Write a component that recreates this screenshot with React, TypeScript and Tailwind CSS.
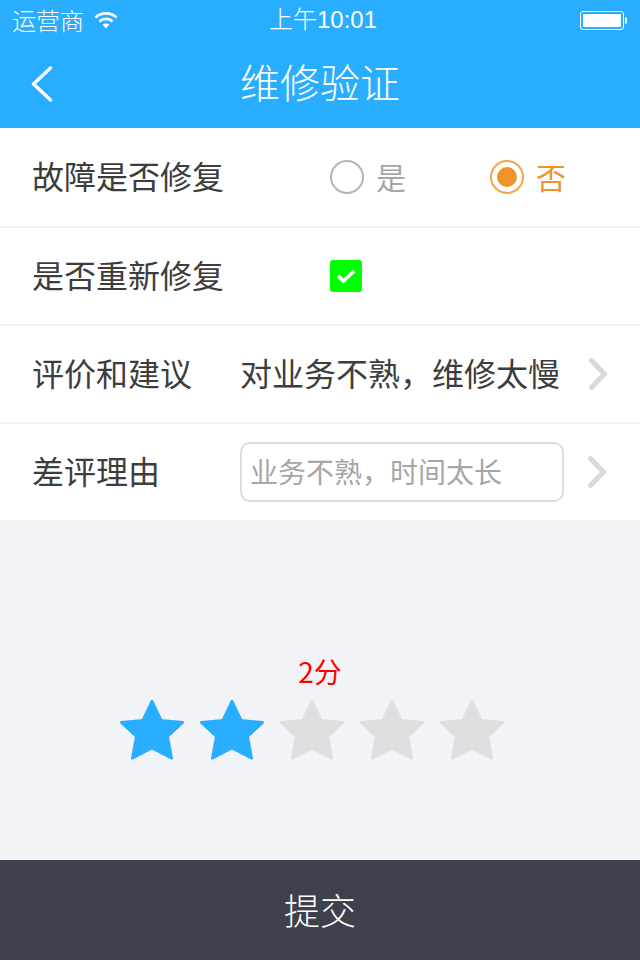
const cjk = 'font-["Noto_Sans_CJK_SC","Noto_Sans",sans-serif]';

function Star({ on }: { on: boolean }) {
  const color = on ? '#29adff' : '#dedee0';
  return (
    <svg width="66" height="64" viewBox="0 0 66 64" aria-hidden>
      <path
        d="M33 3.5 L42 22.5 L63.5 24.5 L48.5 38.5 L52.5 60 L33 50 L13.5 60 L17.5 38.5 L2.5 24.5 L24 22.5 Z"
        fill={color}
        stroke={color}
        strokeWidth="3"
        strokeLinejoin="round"
      />
    </svg>
  );
}

function Chevron({ className }: { className: string }) {
  return (
    <svg className={className} width="20" height="34" viewBox="0 0 20 34" fill="none" stroke="#d8d9dc" strokeWidth="5" strokeLinecap="round" strokeLinejoin="round" aria-hidden>
      <path d="M3.5 3.5 L16.5 17 L3.5 30.5" />
    </svg>
  );
}

function Row({ label, children, last }: { label: string; children: React.ReactNode; last?: boolean }) {
  return (
    <div className={`flex items-center pl-[32px] ${last ? 'h-[96px]' : 'h-[98px] border-b-2 border-[#f2f3f7]'}`}>
      <span className="w-[208px] shrink-0 pb-[4px] text-[32px] leading-none text-[#3d3d3d]">{label}</span>
      {children}
    </div>
  );
}

export default function App() {
  return (
    <div className={`flex h-[960px] w-[640px] flex-col bg-[#f2f3f7] ${cjk}`}>
      <header className="h-[128px] shrink-0 bg-[#29adff] font-light text-white">
        {/* status bar */}
        <div className="relative flex h-[40px] items-center pl-[12px] pr-[13px]">
          <span className="text-[24px] leading-none">运营商</span>
          <svg className="ml-[10px]" width="24" height="18" viewBox="0 0 24 18" fill="none" stroke="#fff" strokeWidth="2.6" aria-hidden>
            <path d="M1.5 6.5 C7 1 17 1 22.5 6.5" />
            <path d="M5.5 10.5 C9 7 15 7 18.5 10.5" />
            <path d="M12 17.5 L8.6 13.6 C10.5 12 13.5 12 15.4 13.6 Z" fill="#fff" stroke="none" />
          </svg>
          <span className="absolute left-[269px] font-['Liberation_Sans','Noto_Sans_CJK_SC',sans-serif] text-[24px] leading-none">上午10:01</span>
          <div className="ml-auto flex items-center">
            <div className="h-[19px] w-[44px] rounded-[3px] border border-white p-[2px]">
              <div className="h-full w-full rounded-[1px] bg-white" />
            </div>
            <div className="ml-[1px] h-[7px] w-[2px] rounded-r-sm bg-white" />
          </div>
        </div>
        {/* nav bar */}
        <div className="relative flex h-[88px] items-center justify-center pb-[6px]">
          <svg className="absolute left-[30px] top-[26px]" width="24" height="36" viewBox="0 0 24 36" fill="none" stroke="#fff" strokeWidth="3.4" strokeLinecap="round" strokeLinejoin="round" aria-hidden>
            <path d="M20.5 2 L3.5 18 L20.5 34" />
          </svg>
          <h1 className="text-[40px] leading-none">维修验证</h1>
        </div>
      </header>

      <div className="bg-white">
        <div className="flex h-[100px] items-center border-b-2 border-[#f2f3f7] pl-[32px]">
          <span className="w-[298px] shrink-0 pb-[4px] text-[32px] leading-none text-[#3d3d3d]">故障是否修复</span>
          <div className="flex w-[160px] items-center gap-[12px]">
            <span className="h-[34px] w-[34px] rounded-full border-2 border-[#b4b4b4]" />
            <span className="pb-[3px] text-[30px] leading-none text-[#a6a6a6]">是</span>
          </div>
          <div className="flex items-center gap-[12px]">
            <span className="flex h-[34px] w-[34px] items-center justify-center rounded-full border-2 border-[#f3a548]">
              <span className="h-[20px] w-[20px] rounded-full bg-[#f0932b]" />
            </span>
            <span className="pb-[3px] text-[30px] leading-none text-[#f0932b]">否</span>
          </div>
        </div>

        <Row label="是否重新修复">
          <div className="ml-[90px] flex h-[32px] w-[32px] items-center justify-center rounded-[3px] bg-[#00ff00]">
            <svg width="20" height="16" viewBox="0 0 20 16" fill="none" stroke="#fff" strokeWidth="3.6" aria-hidden>
              <path d="M2 8 L7.5 13 L18 3" />
            </svg>
          </div>
        </Row>

        <Row label="评价和建议">
          <span className="w-[348px] shrink-0 pb-[4px] text-[32px] leading-none whitespace-nowrap text-[#3d3d3d]">对业务不熟，维修太慢</span>
          <Chevron className="shrink-0" />
        </Row>

        <Row label="差评理由" last>
          <div className="flex h-[60px] w-[324px] shrink-0 items-center rounded-[10px] border-2 border-[#dcdcdc] pb-[2px] pl-[8px] text-[28px] leading-none whitespace-nowrap text-[#a6a6a6]">
            业务不熟，时间太长
          </div>
          <Chevron className="ml-[23px] shrink-0" />
        </Row>
      </div>

      <main className="flex flex-1 flex-col items-center pt-[135px]">
        <span className="text-[28px] leading-[32px] text-[#ff0000]">2分</span>
        <div className="mt-[11px] ml-[-16px] flex gap-[14px]">
          {[true, true, false, false, false].map((on, i) => (
            <Star key={i} on={on} />
          ))}
        </div>
      </main>

      <button className="h-[100px] shrink-0 bg-[#3f404e] pb-[2px] text-[36px] font-light text-white">提交</button>
    </div>
  );
}
